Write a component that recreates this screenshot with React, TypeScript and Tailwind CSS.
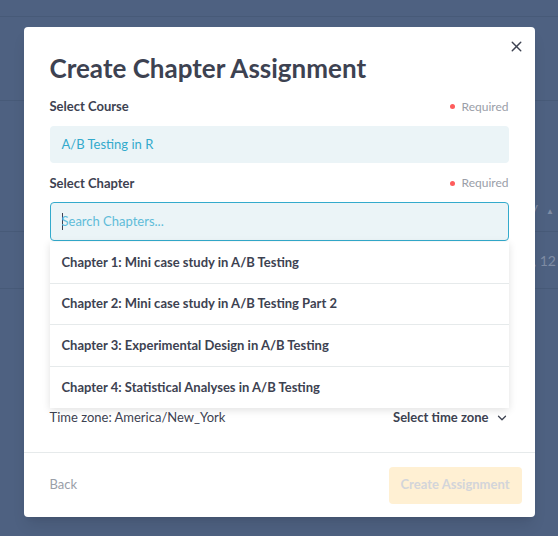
import { X, ChevronDown } from "lucide-react"

const chapters = [
  "Chapter 1: Mini case study in A/B Testing",
  "Chapter 2: Mini case study in A/B Testing Part 2",
  "Chapter 3: Experimental Design in A/B Testing",
  "Chapter 4: Statistical Analyses in A/B Testing",
]

function FieldLabel({ children }: { children: React.ReactNode }) {
  return (
    <div className="flex items-center justify-between">
      <span className="text-[13px] font-bold text-[#3d4251]">{children}</span>
      <span className="flex items-center gap-[7px] text-[12px] text-[#9a9ea8]">
        <span className="h-[5px] w-[5px] rounded-full bg-[#fe5c5c]" />
        Required
      </span>
    </div>
  )
}

export default function App() {
  return (
    <div className="relative h-[536px] w-full overflow-hidden bg-[#4e6181] font-['Lato',sans-serif]">
      {/* page behind the overlay */}
      <div className="flex flex-col">
        <div className="h-[17px] border-b border-[#475a78]" />
        <div className="h-[84px] border-b border-[#475a78]" />
        <div className="flex h-[131px] items-end justify-end border-b border-[#475a78] pb-[14px] pr-[4px] text-[14px] text-[#7f8ca4]">
          y <span className="ml-2 text-[8px]">▲</span>
        </div>
        <div className="flex h-[57px] items-center justify-end border-b border-[#475a78] pr-[2px] text-[14px] text-[#7f8ca4]">
          ., 12
        </div>
      </div>

      {/* modal */}
      <div className="absolute inset-0 flex justify-center pt-[27px]">
        <div className="relative h-[490px] w-[511px] rounded-[4px] bg-white shadow-lg">
          <button className="absolute right-[10px] top-[11px] text-[#3d4251]">
            <X size={17} strokeWidth={2} />
          </button>

          <div className="h-[425px] px-[26px] pt-[22px]">
            <h1 className="text-[26px] font-bold leading-[38px] text-[#3d4251]">Create Chapter Assignment</h1>

            <div className="mt-[10px]">
              <FieldLabel>Select Course</FieldLabel>
              <div className="mt-[9px] flex h-[37px] items-center rounded-[4px] bg-[#ebf4f7] px-[12px] pt-[2px] text-[13px] text-[#33aacc]">
                A/B Testing in R
              </div>
            </div>

            <div className="mt-[11px]">
              <FieldLabel>Select Chapter</FieldLabel>
              <div className="relative mt-[9px]">
                <div className="flex h-[39px] items-center rounded-[4px] border border-[#33aacc] bg-[#ebf4f7] px-[11px] text-[13px] text-[#5fbcd9]">
                  <span className="mr-[-1px] h-[17px] w-px bg-[#3d4251]" />
                  Search Chapters...
                </div>

                {/* dropdown */}
                <div className="absolute left-0 right-0 top-full z-10 mt-[1px] bg-white shadow-[0_2px_8px_rgba(0,0,0,0.12)]">
                  {chapters.map((c, i) => (
                    <div
                      key={c}
                      className={
                        "flex h-[41.5px] items-center px-[12px] text-[13px] font-bold text-[#3d4251]" +
                        (i < chapters.length - 1 ? " border-b border-[#e6eaeb]" : "")
                      }
                    >
                      {c}
                    </div>
                  ))}
                </div>
              </div>

              {/* due date fields, hidden below the menu */}
              <div className="h-[167px]" />
            </div>

            <div className="flex items-center justify-between text-[13px] text-[#3d4251]">
              <span>Time zone: America/New_York</span>
              <span className="flex items-center gap-[6px] font-bold">
                Select time zone
                <ChevronDown size={14} strokeWidth={2.2} />
              </span>
            </div>
          </div>

          <div className="flex h-[65px] items-center justify-between border-t border-[#e6eaeb] pl-[26px] pr-[13px]">
            <span className="text-[13px] text-[#9a9ea8]">Back</span>
            <button className="h-[37px] w-[133px] rounded-[4px] bg-[#fff0d3] text-[13px] font-bold text-[#d3d5da]">
              Create Assignment
            </button>
          </div>
        </div>
      </div>
    </div>
  )
}
